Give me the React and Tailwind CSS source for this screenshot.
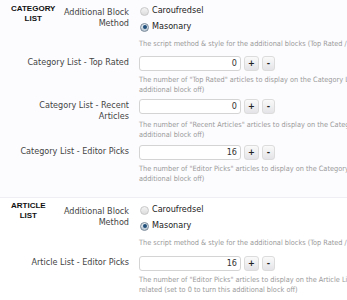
const labelFont = { fontFamily: '"DejaVu Sans Condensed", "DejaVu Sans", sans-serif' };

function Heading({ lines, className }) {
  return (
    <div className={`pl-[11px] ${className} text-center text-[8px] leading-[10px] font-bold text-[#111]`} style={{ fontFamily: '"Liberation Sans", Arial, sans-serif' }}>
      {lines.map((l) => (
        <div key={l}>{l}</div>
      ))}
    </div>
  );
}

function Desc({ children, className = "mt-[4px]" }) {
  return <div className={`${className} text-[7.3px] leading-[10px] text-[#9a9a9a] whitespace-nowrap`}>{children}</div>;
}

function Radio({ checked, label }) {
  return (
    <div className="flex items-center h-[16px] gap-[3px]">
      <span
        className={`ml-[1px] w-[9px] h-[9px] rounded-full border flex items-center justify-center ${
          checked ? "border-[#7a8a99] bg-gradient-to-b from-[#e8eef4] to-[#b9c6d2]" : "border-[#c8c8c8] bg-gradient-to-b from-[#f4f4f4] to-[#dcdcdc]"
        }`}
      >
        {checked && <span className="w-[4px] h-[4px] rounded-full bg-[#1f4f7a]" />}
      </span>
      <span className="text-[9px] text-[#222]">{label}</span>
    </div>
  );
}

function NumberField({ value }) {
  return (
    <div className="flex items-center gap-[3px]">
      <div className="w-[102px] h-[15px] border border-[#d4d4d4] rounded-[3px] bg-white text-right pr-[3px] text-[9px] leading-[13px] text-[#333]">
        {value}
      </div>
      <button className="w-[15px] h-[15px] rounded-[3px] border border-[#dcdcdc] bg-gradient-to-b from-[#fafafa] to-[#e4e4e8] text-[9px] font-bold leading-[13px] text-[#222]">+</button>
      <button className="w-[13px] h-[15px] rounded-[3px] border border-[#dcdcdc] bg-gradient-to-b from-[#fafafa] to-[#e4e4e8] text-[9px] font-bold leading-[13px] text-[#222]">-</button>
    </div>
  );
}

function Row({ heading, headingClass = "-mt-[4px]", label, children, className = "" }) {
  return (
    <div className={`flex ${className}`}>
      <div className="w-[129px] shrink-0 flex justify-between">
        {heading ? <Heading lines={heading} className={headingClass} /> : <span />}
        <div className="text-right text-[9px] leading-[11px] text-[#444] pt-[1px]">{label}</div>
      </div>
      <div className="ml-[10px] min-w-0">{children}</div>
    </div>
  );
}

export default function App() {
  return (
    <div className="w-[347px] h-[300px] overflow-hidden bg-white" style={labelFont}>
      <div className="bg-[#fcfcfe] pt-[6px] pb-[13px] flex flex-col">
        <Row heading={["CATEGORY", "LIST"]} headingClass="-mt-[2px]" label={<>Additional Block<br />Method</>}>
          <div className="-mt-[3px]">
            <Radio label="Caroufredsel" />
            <Radio checked label="Masonary" />
          </div>
          <Desc>The script method &amp; style for the additional blocks (Top Rated / Recent Articles / Editor Picks)</Desc>
        </Row>
        <Row className="mt-[7px]" label="Category List - Top Rated">
          <NumberField value="0" />
          <Desc>
            The number of "Top Rated" articles to display on the Category List (set to 0 to turn this
            <br />
            additional block off)
          </Desc>
        </Row>
        <Row className="mt-[4px]" label={<>Category List - Recent<br />Articles</>}>
          <NumberField value="0" />
          <Desc className="mt-[6px]">
            The number of "Recent Articles" articles to display on the Category List (set to 0 to turn this
            <br />
            additional block off)
          </Desc>
        </Row>
        <Row className="mt-[5px]" label="Category List - Editor Picks">
          <NumberField value="16" />
          <Desc>
            The number of "Editor Picks" articles to display on the Category List (set to 0 to turn this
            <br />
            additional block off)
          </Desc>
        </Row>
      </div>
      <div className="border-t border-[#eeeef4] pt-[7px] flex flex-col">
        <Row heading={["ARTICLE", "LIST"]} label={<>Additional Block<br />Method</>}>
          <div className="-mt-[3px]">
            <Radio label="Caroufredsel" />
            <Radio checked label="Masonary" />
          </div>
          <Desc>The script method &amp; style for the additional blocks (Top Rated / Recent Articles / Editor Picks)</Desc>
        </Row>
        <Row className="mt-[8px]" label="Article List - Editor Picks">
          <NumberField value="16" />
          <Desc>
            The number of "Editor Picks" articles to display on the Article List when an article is
            <br />
            related (set to 0 to turn this additional block off)
          </Desc>
        </Row>
      </div>
    </div>
  );
}
